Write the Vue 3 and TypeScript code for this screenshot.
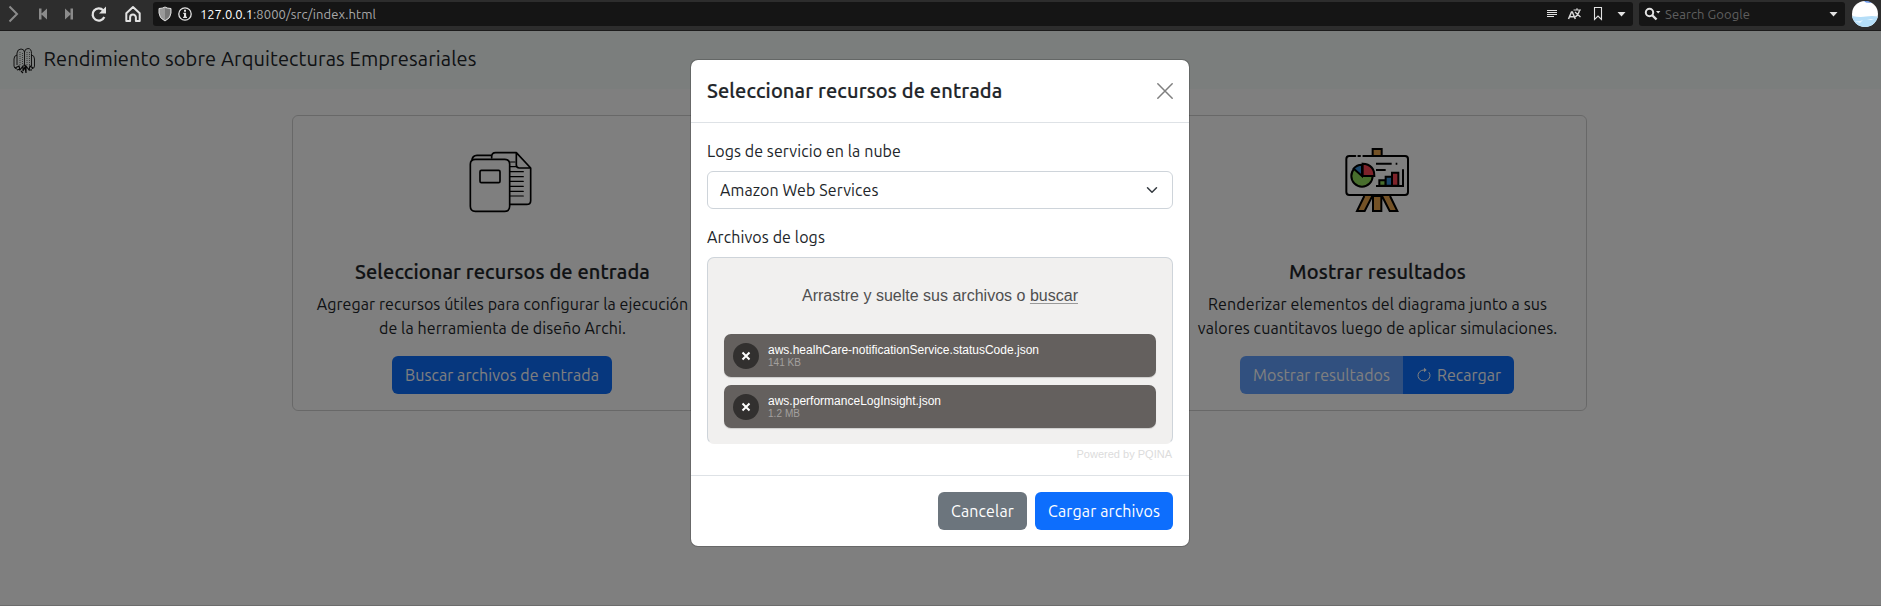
<script setup lang="ts">
import type { Directive } from 'vue'

interface LogFile { name: string; size: string; width: number; sizeWidth: number }

const files: LogFile[] = [
  { name: 'aws.healhCare-notificationService.statusCode.json', size: '141 KB', width: 271, sizeWidth: 33 },
  { name: 'aws.performanceLogInsight.json', size: '1.2 MB', width: 173, sizeWidth: 32 },
]

// Tracks a line of text so that it takes up the given advance width.
const vFit: Directive<HTMLElement, number> = {
  mounted(el, binding) {
    const natural = el.getBoundingClientRect().width
    const count = (el.textContent ?? '').length
    el.style.letterSpacing = `${(binding.value - natural) / count}px`
  },
}
</script>

<template>
  <div class="window">
    <header class="toolbar">
      <svg class="tools" width="153" height="30" viewBox="0 0 153 30" fill="none">
        <path d="M9.500 6.500 17 14l-7.500 7.500" stroke="#8b8b8b" stroke-width="2" />
        <path d="M39 8.500h2.500v11H39zM47 8.500v11L41 14z" fill="#8b8b8b" />
        <path d="M70.500 8.500H73v11h-2.500zM65 8.500v11l6-5.500z" fill="#8b8b8b" />
        <path d="M103.300 10.400A6.100 6.100 0 1 0 104.300 17" stroke="#e2e2e2" stroke-width="2.300" />
        <path d="M106 6.500v7h-7z" fill="#e2e2e2" />
        <path d="M126.300 13.200 133 7l6.700 6.200V21h-3.800v-3.500a2.900 2.900 0 0 0-5.800 0V21h-3.800z" stroke="#e2e2e2" stroke-width="2" stroke-linejoin="round" />
      </svg>
      <div class="address">
        <svg width="42" height="24" viewBox="153 2 42 24">
          <path d="M159 8.500q3.500 0 6-1.500 2.500 1.500 6 1.500V13q0 5-6 8-6-3-6-8z" fill="#999" stroke="#ddd" />
          <path d="M165 8.300v11.500q4.900-2.600 5-6.800V9.300q-3 0-5-1z" fill="#777" />
          <circle cx="185" cy="14" r="6.200" fill="none" stroke="#e2e2e2" stroke-width="1.300" />
          <path d="M184 9.800h2v2h-2zM183.300 12.700h2.800v4h.9v1.300h-3.900v-1.300h.9v-2.700h-.7z" fill="#e2e2e2" />
        </svg>
        <span class="url"><span v-fit="53" class="host">127.0.0.1</span><span v-fit="123">:8000/src/index.html</span></span>
        <svg class="address-tools" width="94" height="24" viewBox="1539 2 94 24" fill="none">
          <path d="M1547 10.500h10M1547 12.500h10M1547 14.500h10M1547 16.500h7" stroke="#e2e2e2" stroke-width="1" />
          <path d="m1568.500 19 3-7h.8l3 7M1569.500 16.800h5" stroke="#d8d8d8" stroke-width="1.500" />
          <path d="M1573.500 10h7.500M1577 8.300V10M1575 12l5.500 5M1579.500 10.500q-1 4.500-4.500 6.500" stroke="#d8d8d8" stroke-width="1.200" />
          <path d="M1594.500 7.500h7v12l-3.500-3.500-3.500 3.500z" stroke="#e2e2e2" stroke-width="1.100" />
          <path d="M1617.500 12h8l-4 4.500z" fill="#e2e2e2" />
        </svg>
      </div>
      <div class="search">
        <svg width="24" height="24" viewBox="1639 2 24 24" fill="none">
          <circle cx="1649.500" cy="12.500" r="3.700" stroke="#e2e2e2" stroke-width="2" />
          <path d="m1652 15 4.500 4.500" stroke="#e2e2e2" stroke-width="2.400" />
          <path d="M1656 11h4.400l-2.200 2.500z" fill="#e2e2e2" />
        </svg>
        <span v-fit="85" class="search-hint">Search Google</span>
        <svg class="search-arrow" width="20" height="24" viewBox="0 0 20 24"><path d="M4.500 10h8l-4 4.500z" fill="#e2e2e2" /></svg>
      </div>
      <svg class="avatar" width="26" height="26" viewBox="0 0 26 26">
        <clipPath id="face"><circle cx="13" cy="13" r="13" /></clipPath>
        <g clip-path="url(#face)">
          <path d="M0 0h26v26H0z" fill="#fff" />
          <path d="M0 15q8 1.500 14 .5t12 0V26H0z" fill="#b5def8" />
          <path d="M12 0h9v2l-7-.5z" fill="#5b8de8" />
          <path d="M2 20q5 1 9-1l-3 3zM15 18h7l-3 1z" fill="#e6f5ff" />
        </g>
      </svg>
    </header>

    <main class="page">
      <nav class="navbar">
        <svg width="24" height="27" viewBox="0 0 24 27" fill="none" stroke="#111" stroke-width=".9">
          <path d="M5 18V6q.5-4 4-4 3 0 3.500 3V19M12.500 5Q13 1.500 16 1.500q3.500 0 3.500 5V19" />
          <path d="M5 8q-3 .5-3 4v7q0 2.500 3 3M19.500 8q3 .5 3 4v7q0 2.500-3 3" />
          <path d="M8 5v14M10.500 6v12M15 5v14M17.500 5v13" stroke-dasharray="1 1" stroke-width=".6" />
          <path d="m3 21 4-2 1 4 3-4v5l2-4 1 6v-7l3 4 1-4 3 2M5 23l3-1M9 24l2 2M17 23h3" stroke-width="1.200" />
        </svg>
        <span v-fit="433" class="brand">Rendimiento sobre Arquitecturas Empresariales</span>
      </nav>

      <section class="cards">
        <article class="card">
          <div class="picture">
            <svg width="64" height="64" viewBox="90 60 192 192" fill="none" stroke="#000" stroke-width="5" stroke-linejoin="round" stroke-linecap="round">
              <path d="M155 84v-4q0-12 12-12h62l43 46v98q0 11-12 11h-50M229 68v37q0 9 9 9h34" />
              <path d="M95 93q2-17 16-17h42M91 103q0-15 15-15h88q15 0 15 15v126q0 15-15 15h-88q-15 0-15-15z" />
              <rect x="120" y="121" width="60" height="37" rx="4" />
              <path d="M211 96h14M211 110h16M211 125h39M211 140h39M211 154h39M211 169h39M211 184h39M211 198h39" stroke-width="3.500" />
            </svg>
          </div>
          <h5><span v-fit="295">Seleccionar recursos de entrada</span></h5>
          <p><span v-fit="371">Agregar recursos útiles para configurar la ejecución</span><br><span v-fit="247">de la herramienta de diseño Archi.</span></p>
          <button class="btn primary"><span v-fit="194">Buscar archivos de entrada</span></button>
        </article>
        <article class="card" />
        <article class="card">
          <div class="picture">
            <svg width="64" height="64" viewBox="75 60 192 192" fill="none" stroke="#000" stroke-width="6">
              <path d="M158 76V57h27v19M133 198l-22 45h23l23-45M186 198l23 45h23l-22-45M159 198v45h25v-45z" fill="#e9a44d" />
              <path d="M106 78H88q-9 0-9 9v99q0 9 9 9h167q9 0 9-9V87q0-9-9-9H130M115 78h5" stroke-linecap="round" />
              <circle cx="126" cy="138" r="32" fill="#91dc5a" />
              <path d="M126 138 101 116q9-12 25-12z" fill="#348fd9" />
              <path d="M128 101q35 2 35 37h-35z" fill="#fd4755" />
              <path d="M168 101h47M227 101h5M168 120h29" />
              <path d="M178 167v-16h19v16z" fill="#91dc5a" />
              <path d="M197 167v-27h19v27z" fill="#348fd9" />
              <path d="M216 167v-39h19v39z" fill="#fd4755" />
              <path d="M168 168h81v-50" />
            </svg>
          </div>
          <h5><span v-fit="177">Mostrar resultados</span></h5>
          <p><span v-fit="339">Renderizar elementos del diagrama junto a sus</span><br><span v-fit="359.500">valores cuantitavos luego de aplicar simulaciones.</span></p>
          <div class="group">
            <button class="btn primary faded"><span v-fit="137">Mostrar resultados</span></button>
            <button class="btn primary">
              <svg width="16" height="16" viewBox="0 0 16 16" fill="none" stroke="#fff"><path d="M8 3a6 5.500 0 1 0 4.800 2.200" /><path d="M8 .8v4.400L10.700 3z" fill="#fff" stroke="none" /></svg>
              <span v-fit="64">Recargar</span>
            </button>
          </div>
        </article>
      </section>

      <div class="backdrop">
        <div class="modal">
          <div class="modal-header">
            <h5><span v-fit="295.500">Seleccionar recursos de entrada</span></h5>
            <svg width="16" height="16" viewBox="0 0 16 16"><path d="m.8.8 14.400 14.400M15.200.8.8 15.200" stroke="#7f7f7f" stroke-width="1.500" stroke-linecap="round" /></svg>
          </div>
          <div class="modal-body">
            <label><span v-fit="194">Logs de servicio en la nube</span></label>
            <div class="select">
              <span v-fit="158.500">Amazon Web Services</span>
              <svg width="16" height="12" viewBox="0 0 16 16"><path d="m2 5 6 6 6-6" fill="none" stroke="#343a40" stroke-width="2" stroke-linecap="round" stroke-linejoin="round" /></svg>
            </div>
            <label><span v-fit="118">Archivos de logs</span></label>
            <div class="drop">
              <div class="drop-label"><span v-fit="276">Arrastre y suelte sus archivos o <u>buscar</u></span></div>
              <div v-for="file in files" :key="file.name" class="file">
                <span class="remove"><svg width="10" height="10" viewBox="0 0 10 10"><path d="m1.500 1.500 7 7M8.500 1.500l-7 7" stroke="#fff" stroke-width="2" /></svg></span>
                <div class="info">
                  <div class="name"><span v-fit="file.width">{{ file.name }}</span></div>
                  <div class="size"><span v-fit="file.sizeWidth">{{ file.size }}</span></div>
                </div>
              </div>
            </div>
            <div class="credits"><span v-fit="95.500">Powered by PQINA</span></div>
          </div>
          <div class="modal-footer">
            <button class="btn secondary"><span v-fit="63">Cancelar</span></button>
            <button class="btn primary"><span v-fit="112">Cargar archivos</span></button>
          </div>
        </div>
      </div>
    </main>
  </div>
</template>

<style>
body { margin: 0; overflow: hidden; }
</style>

<style scoped>
* { box-sizing: border-box; }
svg { display: block; flex: none; overflow: visible; }
span[class], h5 span, p span, label span, button span, .select span, .drop-label span, .info span, .credits span { display: inline-block; white-space: pre; }
.window { width: 1881px; height: 606px; display: flex; flex-direction: column; font: 16px/24px Ubuntu, "Noto Sans", sans-serif; color: #212529; overflow: hidden; }
.toolbar { height: 31px; flex: none; display: flex; align-items: flex-start; background: #2d2d2d; border-bottom: 1px solid #1b1b1b; font-size: 13px; line-height: 22px; }
.address, .search { height: 24px; margin-top: 2px; background: #151515; border-radius: 3px; display: flex; }
.address { width: 1480px; }
.url { display: flex !important; color: #a9a9a9; margin-left: 5px; line-height: 24px; }
.host { color: #fff; }
.address-tools { margin-left: auto; }
.search { width: 206px; margin-left: 6px; }
.search-hint { color: #5f5f5f; margin-left: 2px; line-height: 24px; }
.search-arrow { margin-left: auto; }
.avatar { margin: 1px 0 0 7px; }
.page { flex: 1; position: relative; background: #fff; }
.navbar { height: 58px; background: #f7fcfa; display: flex; align-items: center; padding-left: 12px; }
.navbar svg { margin-top: 1px; }
.brand { font-size: 20px; line-height: 30px; margin: -2px 0 0 7.500px; }
.cards { display: flex; justify-content: space-between; width: 1295px; margin: 26px 0 0 292px; }
.card { width: 420px; height: 296px; border: 1px solid rgba(0, 0, 0, .18); border-radius: 6px; text-align: center; }
.picture { height: 128px; display: flex; align-items: center; justify-content: center; padding-top: 4px; }
h5 { margin: 0; font-size: 20px; font-weight: 500; line-height: 24px; -webkit-text-stroke: .2px currentColor; }
.card h5 { margin-top: 16px; padding-left: 1px; }
p { margin: 8px 0 16px; height: 48px; padding-left: 1px; }
.btn { height: 38px; border: 0; border-radius: 6px; padding: 0 13px; font: inherit; color: #fff; }
.primary { background: #0d6efd; }
.secondary { background: #6c757d; }
.group { display: flex; justify-content: center; }
.group .btn { display: flex; align-items: center; gap: 5px; }
.group .btn:first-child { border-radius: 6px 0 0 6px; }
.group .btn:last-child { border-radius: 0 6px 6px 0; }
.group .faded { background: #62a0fe; color: #fff; }
.backdrop { position: absolute; inset: 0; background: rgba(0, 0, 0, .5); border-bottom: 1px solid rgba(0, 0, 0, .15); }
.modal { width: 500px; height: 488px; margin: 28px 0 0 690px; border: 1px solid rgba(0, 0, 0, .18); border-radius: 8px; background: #fff; background-clip: padding-box; }
.modal-header { height: 63px; padding: 0 16px; display: flex; align-items: center; justify-content: space-between; border-bottom: 1px solid #dee2e6; }
.modal-body { height: 352px; padding: 16px; }
label { display: block; height: 32px; }
.select { height: 38px; margin-bottom: 16px; border: 1px solid #ced4da; border-radius: 6px; padding: 0 12px; display: flex; align-items: center; justify-content: space-between; }
.drop { height: 187px; border: 1px solid #ced4da; border-bottom-color: #f1f0ef; border-radius: 7px; background: #f1f0ef; padding: 0 16px; font-family: "Liberation Sans", sans-serif; }
.drop-label { height: 76px; text-align: center; font-size: 16px; line-height: 76px; color: #4f4f4f; }
.drop-label u { text-decoration-thickness: 1px; text-underline-offset: 2px; text-decoration-color: #999; text-decoration-skip-ink: none; }
.file { height: 43px; margin-bottom: 8px; border-radius: 7px; background: #64605e; color: #fff; display: flex; align-items: center; padding-left: 9px; box-shadow: 0 1px 1px rgba(0, 0, 0, .15); }
.remove { width: 26px; height: 26px; border-radius: 50%; background: #32302f; display: flex !important; align-items: center; justify-content: center; }
.info { margin-left: 9px; }
.name { font-size: 12px; line-height: 14px; }
.size { font-size: 10px; line-height: 11px; color: #a3a09f; }
.credits { text-align: right; font: 11px/20px "Liberation Sans", sans-serif; color: #dcdcdc; padding-right: 1px; }
.modal-footer { height: 71px; border-top: 1px solid #dee2e6; padding: 16px; display: flex; justify-content: flex-end; gap: 8px; }
</style>
